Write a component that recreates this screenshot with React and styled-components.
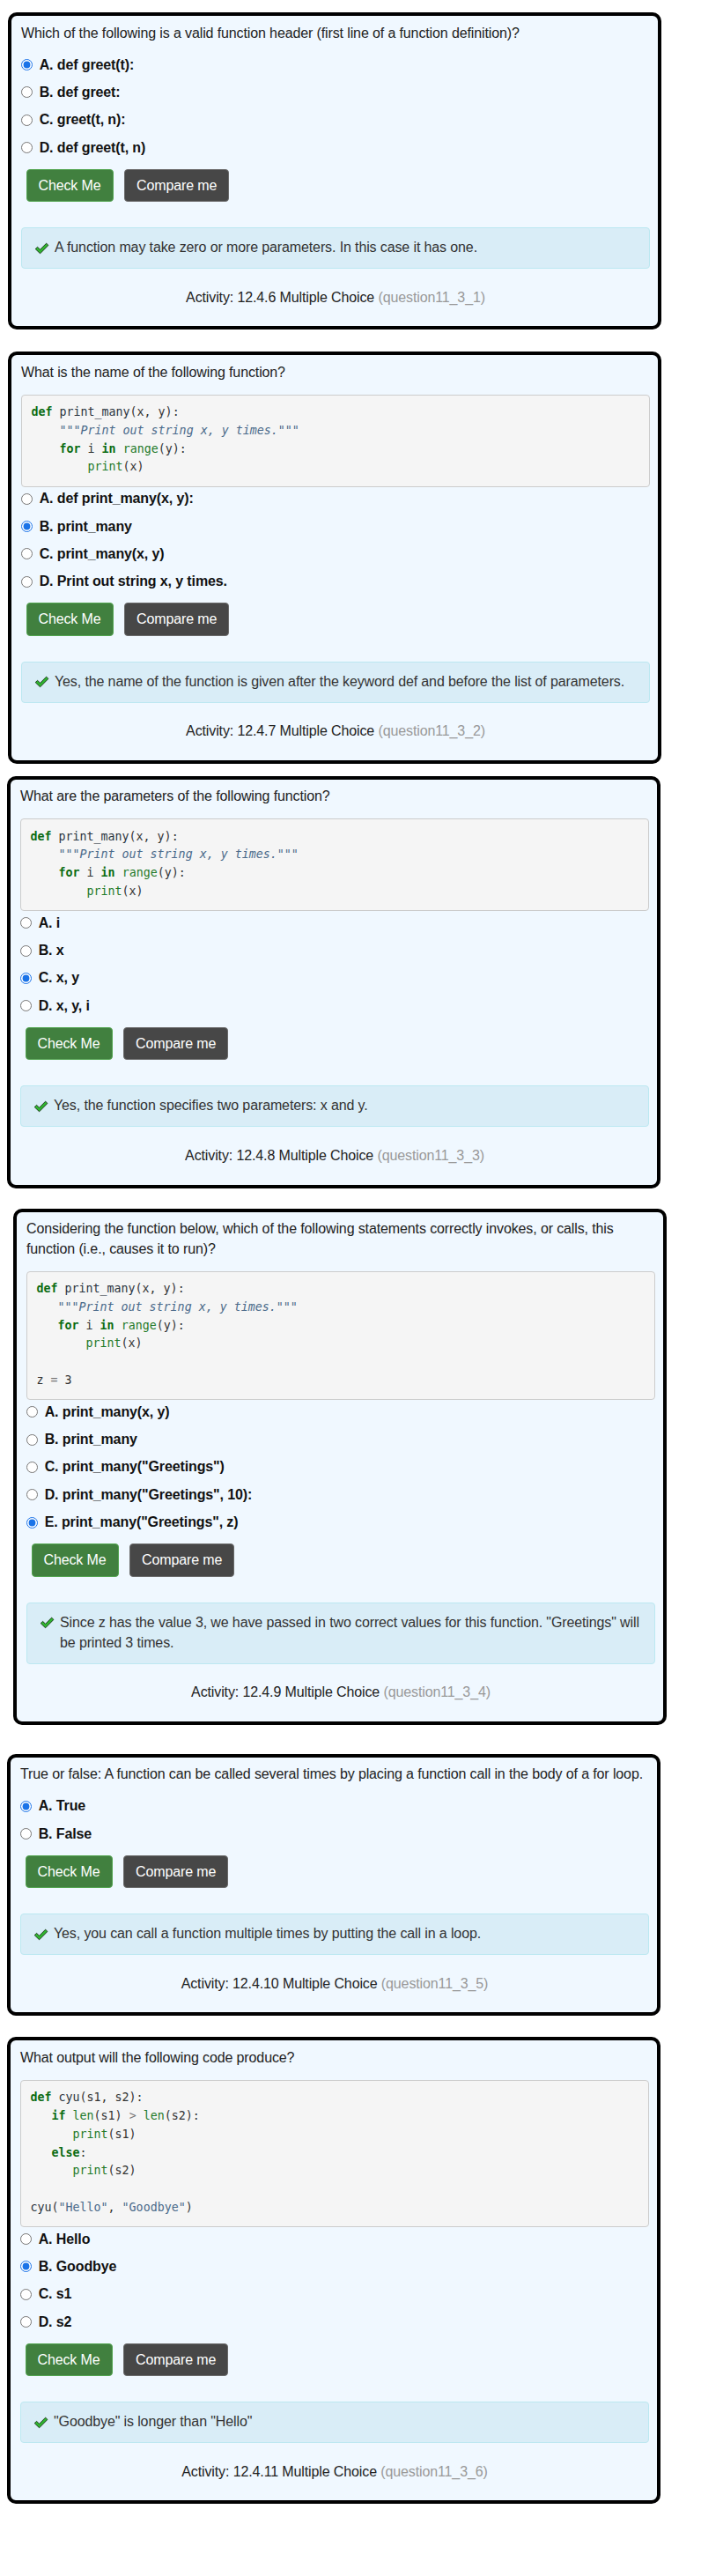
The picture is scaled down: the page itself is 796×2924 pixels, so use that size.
import React from 'react';
import styled, { createGlobalStyle } from 'styled-components';

const GlobalStyle = createGlobalStyle`
    html, body {
        margin: 0;
        padding: 0;
        background: #ffffff;
    }
    body {
        font-family: "Liberation Sans", Arial, Helvetica, sans-serif;
        font-size: 16px;
        letter-spacing: -0.12px;
        color: #333;
    }
`;

const Page = styled.div`
    display: flex;
    flex-direction: column;
    align-items: flex-start;
    padding-bottom: 85px;
`;

const Card = styled.div`
    box-sizing: border-box;
    width: 742px;
    margin-top: ${props => props.top}px;
    margin-left: ${props => props.left}px;
    padding: 8.5px 9px 20.8px 11px;
    border: 4px solid #000;
    border-radius: 10px;
    background-color: #f0f8ff;
`;

const Prompt = styled.p`
    margin: 0 0 12.8px 0;
    line-height: 22.86px;
    color: #222;
`;

const CodeBlock = styled.pre`
    margin: 0 0 2px 0;
    padding: 9.5px 10.5px 10.5px 10.5px;
    background-color: #f5f5f5;
    border: 1px solid #ccc;
    border-radius: 4px;
    font-family: "DejaVu Sans Mono", "Liberation Mono", monospace;
    font-size: 13.3px;
    letter-spacing: 0;
    line-height: 20.8px;
    color: #333;
    white-space: pre;
`;

const Token = styled.span`
    color: ${props => props.color};
    font-weight: ${props => (props.bold ? 'bold' : 'normal')};
    font-style: ${props => (props.italic ? 'italic' : 'normal')};
`;

const OptionList = styled.div`
    display: flex;
    flex-direction: column;
`;

const Option = styled.label`
    display: flex;
    align-items: center;
    height: 22.86px;
    margin-bottom: 8.5px;
    font-weight: bold;
    color: #111;
`;

const Radio = styled.input`
    width: 13px;
    height: 13px;
    margin: 0 7.7px 0 0;
    accent-color: #1a73e8;
`;

const ButtonRow = styled.div`
    display: flex;
    gap: 12.5px;
    margin: 4.3px 0 0 5.5px;
`;

const Button = styled.button`
    box-sizing: border-box;
    height: 37.4px;
    padding: 0 13px;
    border-radius: 4px;
    border: 1px solid ${props => (props.variant === 'check' ? '#53a450' : '#6a6a6a')};
    background-color: ${props => (props.variant === 'check' ? '#41803f' : '#474747')};
    color: #fff;
    font-family: "Liberation Sans", Arial, sans-serif;
    font-size: 16px;
    letter-spacing: -0.12px;
    cursor: pointer;
`;

const Feedback = styled.div`
    display: flex;
    align-items: flex-start;
    margin-top: 29px;
    padding: 11px 13px;
    background-color: #d9edf7;
    border: 1px solid #bce8f1;
    border-radius: 4px;
    line-height: 22.86px;
    color: #333;
`;

const FeedbackText = styled.span`
    flex: 1;
`;

const CheckIcon = styled.svg`
    flex: none;
    width: 17px;
    height: 14px;
    margin: 4.5px 6px 0 1px;
`;

const Footer = styled.div`
    margin-top: 21.6px;
    text-align: center;
    line-height: 22.86px;
    color: #222;
`;

const QuestionId = styled.span`
    color: #999;
`;

const C = {
    k: { color: '#0b6b12', bold: true },
    b: { color: '#1f7a2a' },
    n: { color: '#2b3440' },
    d: { color: '#4a6a8a', italic: true },
    s: { color: '#4a6a8a' },
    o: { color: '#777' },
    p: { color: '#333' },
};

const fnCode = (ind1, ind2) => [
    [['k', 'def'], ['n', ' print_many'], ['p', '(x, y):']],
    [['p', ind1], ['d', '"""Print out string x, y times."""']],
    [['p', ind1], ['k', 'for'], ['p', ' i '], ['k', 'in'], ['p', ' '], ['b', 'range'], ['p', '(y):']],
    [['p', ind2], ['b', 'print'], ['p', '(x)']],
];

const questions = [
    {
        top: 14,
        left: 9,
        prompt: 'Which of the following is a valid function header (first line of a function definition)?',
        options: ['A. def greet(t):', 'B. def greet:', 'C. greet(t, n):', 'D. def greet(t, n)'],
        selected: 0,
        feedback: 'A function may take zero or more parameters. In this case it has one.',
        activity: '12.4.6',
        qid: 'question11_3_1',
    },
    {
        top: 25,
        left: 9,
        prompt: 'What is the name of the following function?',
        code: fnCode('    ', '        '),
        options: ['A. def print_many(x, y):', 'B. print_many', 'C. print_many(x, y)', 'D. Print out string x, y times.'],
        selected: 1,
        feedback: 'Yes, the name of the function is given after the keyword def and before the list of parameters.',
        activity: '12.4.7',
        qid: 'question11_3_2',
    },
    {
        top: 14,
        left: 8,
        prompt: 'What are the parameters of the following function?',
        code: fnCode('    ', '        '),
        options: ['A. i', 'B. x', 'C. x, y', 'D. x, y, i'],
        selected: 2,
        feedback: 'Yes, the function specifies two parameters: x and y.',
        activity: '12.4.8',
        qid: 'question11_3_3',
    },
    {
        top: 23,
        left: 15,
        prompt: 'Considering the function below, which of the following statements correctly invokes, or calls, this function (i.e., causes it to run)?',
        code: [
            ...fnCode('   ', '       '),
            [['p', ' ']],
            [['p', 'z '], ['o', '='], ['p', ' 3']],
        ],
        options: [
            'A. print_many(x, y)',
            'B. print_many',
            'C. print_many("Greetings")',
            'D. print_many("Greetings", 10):',
            'E. print_many("Greetings", z)',
        ],
        selected: 4,
        feedback: 'Since z has the value 3, we have passed in two correct values for this function. "Greetings" will be printed 3 times.',
        activity: '12.4.9',
        qid: 'question11_3_4',
    },
    {
        top: 33,
        left: 8,
        prompt: 'True or false: A function can be called several times by placing a function call in the body of a for loop.',
        options: ['A. True', 'B. False'],
        selected: 0,
        feedback: 'Yes, you can call a function multiple times by putting the call in a loop.',
        activity: '12.4.10',
        qid: 'question11_3_5',
    },
    {
        top: 24,
        left: 8,
        prompt: 'What output will the following code produce?',
        code: [
            [['k', 'def'], ['n', ' cyu'], ['p', '(s1, s2):']],
            [['p', '   '], ['k', 'if'], ['p', ' '], ['b', 'len'], ['p', '(s1) '], ['o', '>'], ['p', ' '], ['b', 'len'], ['p', '(s2):']],
            [['p', '      '], ['b', 'print'], ['p', '(s1)']],
            [['p', '   '], ['k', 'else'], ['p', ':']],
            [['p', '      '], ['b', 'print'], ['p', '(s2)']],
            [['p', ' ']],
            [['n', 'cyu'], ['p', '('], ['s', '"Hello"'], ['p', ', '], ['s', '"Goodbye"'], ['p', ')']],
        ],
        options: ['A. Hello', 'B. Goodbye', 'C. s1', 'D. s2'],
        selected: 1,
        feedback: '"Goodbye" is longer than "Hello"',
        activity: '12.4.11',
        qid: 'question11_3_6',
    },
];

const Check = () => (
    <CheckIcon viewBox="0 0 17 14">
        <path
            d="M1.2 7.6 L3.6 5.4 L6.6 8.3 L13.6 1.2 L15.9 3.4 L6.6 12.8 Z"
            fill="#2fb52f"
            stroke="#1d3d1d"
            strokeWidth="1"
            strokeLinejoin="round"
        />
    </CheckIcon>
);

const Code = ({ lines }) => (
    <CodeBlock>
        {lines.map((line, i) => (
            <div key={i}>
                {line.map(([type, text], j) => (
                    <Token key={j} {...C[type]}>{text}</Token>
                ))}
            </div>
        ))}
    </CodeBlock>
);

const Question = ({ q, index }) => (
    <Card top={q.top} left={q.left}>
        <Prompt>{q.prompt}</Prompt>
        {q.code && <Code lines={q.code} />}
        <OptionList>
            {q.options.map((opt, i) => (
                <Option key={i}>
                    <Radio type="radio" name={`q${index}`} defaultChecked={i === q.selected} />
                    {opt}
                </Option>
            ))}
        </OptionList>
        <ButtonRow>
            <Button variant="check">Check Me</Button>
            <Button variant="compare">Compare me</Button>
        </ButtonRow>
        <Feedback>
            <Check />
            <FeedbackText>{q.feedback}</FeedbackText>
        </Feedback>
        <Footer>
            Activity: {q.activity} Multiple Choice <QuestionId>({q.qid})</QuestionId>
        </Footer>
    </Card>
);

const App = () => {
    return (
        <>
            <GlobalStyle />
            <Page>
                {questions.map((q, i) => (
                    <Question key={q.qid} q={q} index={i} />
                ))}
            </Page>
        </>
    );
};

export default App;
